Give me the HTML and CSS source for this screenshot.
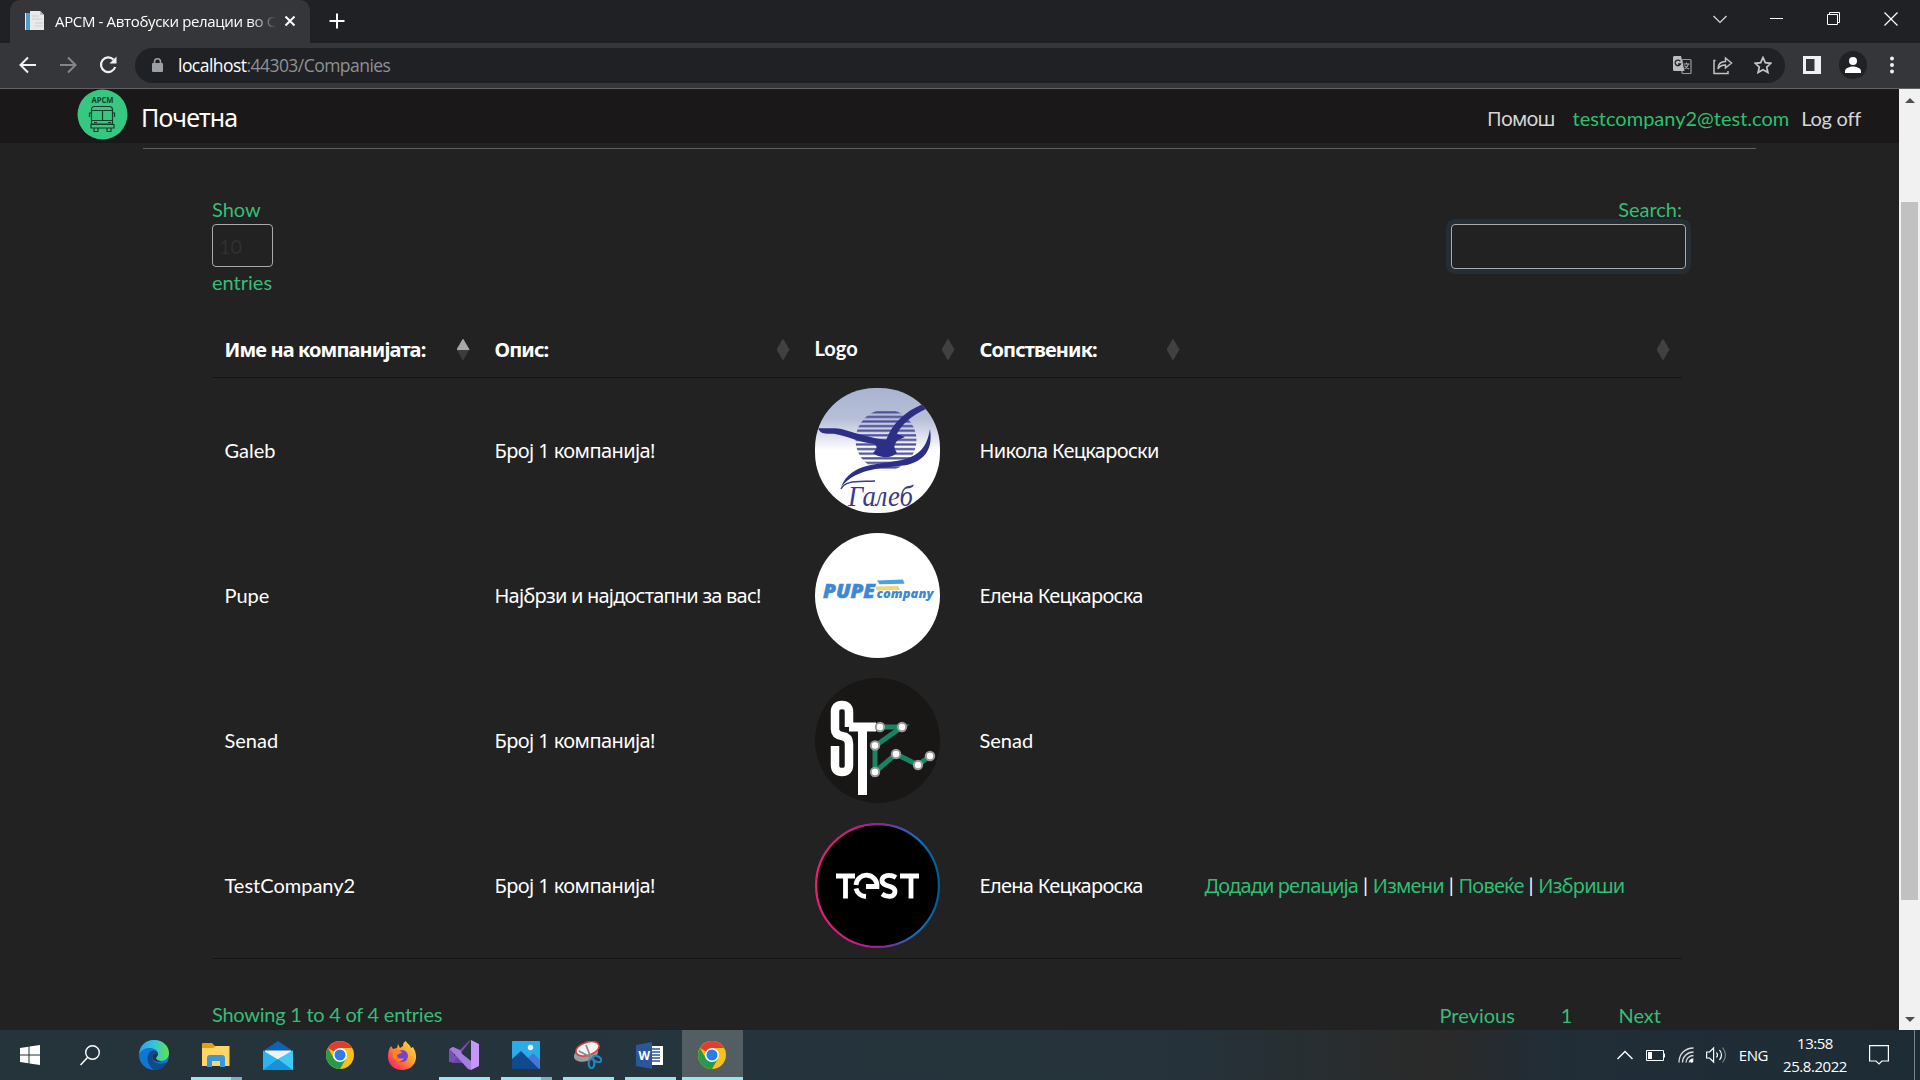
FILE: index.html
```
<!DOCTYPE html>
<html lang="mk">
<head>
<meta charset="utf-8">
<title>АРСМ - Автобуски релации во Северна Македонија</title>
<link rel="stylesheet" href="styles.css">
</head>
<body>
<header class="tabstrip">
  <div class="tab">
    <svg class="favicon" width="20" height="20" viewBox="0 0 20 20"><path d="M0 2h12v17H0z" fill="#e8edf0"/><path d="M1 2h4v17H1z" fill="#4d9bd0"/><path d="M5 0h10l4 4v15H8L5 16z" fill="#e9e9ea"/><path d="M15 0v4h4z" fill="#bbb"/><path d="M7 5h7M7 8h10M10 12h8M10 15h8" stroke="#c9ced1"/></svg>
    <span class="tab-title"><span class="t1">АРСМ - Автобуски релации во С</span></span>
    <svg class="tab-close" width="12" height="12" viewBox="0 0 12 12"><path d="M1.5 1.500l9 9M10.500 1.500l-9 9" stroke="#fff" stroke-width="2"/></svg>
  </div>
  <svg class="newtab" width="16" height="16" viewBox="0 0 16 16"><path d="M8 .5v15M.5 8h15" stroke="#fff" stroke-width="2"/></svg>
  <div class="winctl">
    <svg width="14" height="14" viewBox="0 0 14 14"><path d="M.5 4l6.500 6.500L13.500 4" fill="none" stroke="#ddd" stroke-width="1.200"/></svg>
    <svg width="14" height="14" viewBox="0 0 14 14"><path d="M0 6.500h13" stroke="#fff"/></svg>
    <svg width="14" height="14" viewBox="0 0 14 14"><path d="M.5 2.500h10v10H.5zM2.500 2.500v-2h10v10h-2" fill="none" stroke="#fff"/></svg>
    <svg width="14" height="14" viewBox="0 0 14 14"><path d="M.5.5l13 13M13.500.5l-13 13" stroke="#fff" stroke-width="1.200"/></svg>
  </div>
</header>
<div class="toolbar">
  <svg class="back" width="18" height="18" viewBox="0 0 18 18"><path d="M17 9H2M9 1.500L1.500 9 9 16.500" fill="none" stroke="#f1f1f1" stroke-width="2"/></svg>
  <svg class="fwd" width="18" height="18" viewBox="0 0 18 18"><path d="M1 9h15M9 1.500L16.500 9 9 16.500" fill="none" stroke="#85868a" stroke-width="2"/></svg>
  <svg class="reload" width="18" height="18" viewBox="0 0 18 18"><path d="M14.500 3.600A7.300 7.300 0 1 0 16.200 11" fill="none" stroke="#f1f1f1" stroke-width="2.200"/><path d="M17.500 0.500v7h-7z" fill="#f1f1f1"/></svg>
  <div class="omnibox">
    <svg width="12" height="14" viewBox="0 0 12 14"><rect x="0" y="5" width="11" height="9" rx="1" fill="#9aa0a6"/><path d="M2.500 6V3.800a3 3 0 0 1 6 0V6" fill="none" stroke="#9aa0a6" stroke-width="1.600"/></svg>
    <span class="url"><b>localhost</b>:44303/Companies</span>
    <svg class="o1" width="19" height="19" viewBox="0 0 19 19"><rect x="9" y="3.500" width="9" height="14" rx="1" fill="none" stroke="#9a9a9b" stroke-width="1.200"/><path d="M1 0h7l3.500 15H1.500A1.500 1.500 0 0 1 0 13.500V1z" fill="#bdbdbe"/><path d="M7.300 5.300A2.800 2.800 0 1 0 7.500 8H5" fill="none" stroke="#202124" stroke-width="1.300"/><path d="M10.500 8h6M13.500 6.500V8M15.500 8c-.5 2.500-2.500 4-4 5M11.500 9.500c1 1.500 3 3 4.500 3.500" fill="none" stroke="#aaa" stroke-width="1.100"/></svg>
    <svg class="o2" width="20" height="19" viewBox="0 0 20 19"><path d="M2.500 4.500H1v13h14v-2.500M5 13c0-5 3-7.500 7.500-7.500V2L18.500 7 12.500 12V9C9 9 6.500 10 5 13z" fill="none" stroke="#c2c2c3" stroke-width="1.500"/></svg>
    <svg class="o3" width="18" height="18" viewBox="0 0 18 18"><path d="M9 1.500l2.300 5.200 5.500.6-4.100 3.700 1.200 5.500L9 13.700l-4.900 2.800L5.300 11 1.200 7.300l5.500-.6z" fill="none" stroke="#c6c6c7" stroke-width="1.700"/></svg>
  </div>
  <svg class="side" width="18" height="18" viewBox="0 0 18 18"><path fill-rule="evenodd" d="M0 0h18v18H0zM3 3v12h8.500V3z" fill="#f1f1f4"/></svg>
  <svg class="person" width="28" height="28" viewBox="0 0 28 28"><circle cx="14" cy="14" r="14" fill="#202124"/><circle cx="14" cy="10" r="4" fill="#fff"/><path d="M6 22v-2c0-3 5-4.500 8-4.500s8 1.500 8 4.500v2z" fill="#fff"/></svg>
  <svg class="dots" width="4" height="18" viewBox="0 0 4 18"><circle cx="2" cy="2.500" r="2" fill="#f1f1f1"/><circle cx="2" cy="9" r="2" fill="#f1f1f1"/><circle cx="2" cy="15.500" r="2" fill="#f1f1f1"/></svg>
</div>
<main class="viewport">
  <div class="page">
    <nav class="navbar">
      <svg class="logo" width="51" height="51" viewBox="0 0 51 51"><circle cx="25.500" cy="25.500" r="25" fill="#36c780"/><text x="14.500" y="13.500" textLength="22" lengthAdjust="spacingAndGlyphs" font-family="Open Sans, sans-serif" font-weight="700" font-size="8" fill="#173c2a">АРСМ</text><path d="M14.500 35V21q0-3.500 3-3.500h15q3 0 3 3.500v14zM14.500 21.500h21M25.500 21.500V31M14.500 31.500h21M12.500 28v-4h2M37.500 28v-4h-2M14 35.500h23v3.500H14zM17 39.500v3h4v-3M30 39.500v3h4v-3M17 33.500h3M31 33.500h3" fill="none" stroke="#173c2a" stroke-width="1.200"/></svg>
      <a class="brand cy">Почетна</a>
      <div class="nav-right"><a class="cy help">Помош</a><a class="user">testcompany2@test.com</a><a class="logoff">Log off</a></div>
    </nav>
    <hr class="rule">
    <section class="content">
      <div class="controls">
        <label class="length"><span>Show</span><span class="select">10</span><span>entries</span></label>
        <label class="search"><span>Search:</span><input type="text" class="search-input"></label>
      </div>
      <table class="companies">
        <colgroup><col class="c1"><col class="c2"><col class="c3"><col class="c4"><col class="c5"></colgroup>
        <thead><tr>
          <th><div class="th"><span class="cy">Име на компанијата:</span><i class="sort asc"></i></div></th>
          <th><div class="th"><span class="cy">Опис:</span><i class="sort"></i></div></th>
          <th><div class="th"><span class="latin-head">Logo</span><i class="sort"></i></div></th>
          <th><div class="th"><span class="cy">Сопственик:</span><i class="sort"></i></div></th>
          <th><div class="th"><span></span><i class="sort"></i></div></th>
        </tr></thead>
        <tbody>
        <tr><td class="latin">Galeb</td><td><span class="cy brief">Број 1 компанија!</span></td><td>
          <svg class="pic" width="125" height="125" viewBox="0 0 125 125"><defs><linearGradient id="sky" x2="0" y2="1"><stop offset="0" stop-color="#a9b3d0"/><stop offset=".25" stop-color="#b8c0d8"/><stop offset=".5" stop-color="#fff"/></linearGradient><clipPath id="round"><rect width="125" height="125" rx="60"/></clipPath><pattern id="stripes" width="10" height="4.600" patternUnits="userSpaceOnUse"><path d="M0 1.300h10" stroke="#4c4e98" stroke-width="2.200"/></pattern></defs>
          <g clip-path="url(#round)"><rect width="125" height="125" fill="url(#sky)"/><circle cx="71" cy="52" r="30.500" fill="url(#stripes)"/>
          <path d="M3 40c9 1 17-1 27 2 13 4 27 8 41 10 7-17 18-28 37-36l3 5C97 27 86 37 82 46l8 3-7 3c-5 5-4 8-1 13-6 6-19 5-24 0 4-4 5-7 1-9-12-1-27-8-39-10C14 45 6 48 3 40z" fill="#2d2f87"/>
          <path d="M115 41c3 19-4 31-23 36-21 3-50 2-66 22 10-25 38-22 61-27 19-5 25-14 28-31z" fill="#2d2f87"/>
          <text x="33" y="118" textLength="65" lengthAdjust="spacingAndGlyphs" font-family="Liberation Serif, serif" font-style="italic" font-size="30" fill="#3a3b85">Галеб</text><path d="M26 101c4-9 17-7 34-8" fill="none" stroke="#3a3b85" stroke-width="1.500"/></g></svg></td><td><span class="cy">Никола Кецкароски</span></td><td></td></tr>
        <tr><td class="latin">Pupe</td><td><span class="cy best">Најбрзи и најдостапни за вас!</span></td><td>
          <svg class="pic" width="125" height="125" viewBox="0 0 125 125"><circle cx="62.500" cy="62.500" r="62.500" fill="#fff"/><path d="M62 47.500l26-1 1.500 4.300-25 .5z" fill="#4ba0ec"/><path d="M61 53.500l22-.5 2 4-24 .5z" fill="#f6d27c"/><text x="8" y="65" textLength="52" lengthAdjust="spacingAndGlyphs" font-family="Open Sans, sans-serif" font-weight="800" font-style="italic" font-size="19" fill="#3f88d5" stroke="#3f88d5" stroke-width=".6">PUPE</text><text x="61.500" y="65" textLength="57" lengthAdjust="spacingAndGlyphs" font-family="Open Sans, sans-serif" font-weight="800" font-style="italic" font-size="12.500" fill="#3f88d5">company</text></svg></td><td><span class="cy">Елена Кецкароска</span></td><td></td></tr>
        <tr><td class="latin">Senad</td><td><span class="cy brief">Број 1 компанија!</span></td><td>
          <svg class="pic" width="125" height="125" viewBox="0 0 125 125"><circle cx="62.500" cy="62.500" r="62.500" fill="#181715"/><path d="M34 49V34q0-7-7-7t-7 7v17q0 6 7 7 7 1 7 8v21q0 7-7 7t-7-7V68" fill="none" stroke="#fff" stroke-width="8.500"/><path d="M34 49h27M47.500 49v68" fill="none" stroke="#fff" stroke-width="9"/><path d="M65 49h22L60 68v26l21-18 22 11 12-9" fill="none" stroke="#188463" stroke-width="5"/><g fill="#fff" stroke="#9a9999" stroke-width="2"><circle cx="65" cy="49" r="4.200"/><circle cx="87" cy="49" r="4.200"/><circle cx="60" cy="67.500" r="4.200"/><circle cx="60" cy="94" r="4.200"/><circle cx="81" cy="76" r="4.200"/><circle cx="103" cy="87" r="4.200"/><circle cx="115" cy="78" r="4.200"/></g></svg></td><td class="latin">Senad</td><td></td></tr>
        <tr><td class="latin">TestCompany2</td><td><span class="cy brief">Број 1 компанија!</span></td><td>
          <svg class="pic" width="125" height="125" viewBox="0 0 125 125"><defs><linearGradient id="ring"><stop offset="0" stop-color="#ee1c75"/><stop offset=".5" stop-color="#a0218e"/><stop offset=".62" stop-color="#6f38a0"/><stop offset=".85" stop-color="#0874bd"/><stop offset="1" stop-color="#075a91"/></linearGradient></defs><circle cx="62.500" cy="62.500" r="61.400" fill="#000" stroke="url(#ring)" stroke-width="2.200"/><g fill="none" stroke="#fff" stroke-width="4.800"><path d="M21 53h19M30.500 53v22.500M85 53h19M96 53v22.500"/><path d="M41 62A10.500 10.500 0 0 1 62 63.500H51M41 65.500Q43 73 51 73.500"/><path d="M81 54.500C75 51 67 52 67 57.500c0 7 13 4 13 11 0 6-8 6-13 2.500"/></g></svg></td><td><span class="cy">Елена Кецкароска</span></td><td class="actions"><a class="cy">Додади релација</a> | <a class="cy">Измени</a> | <a class="cy">Повеќе</a> | <a class="cy">Избриши</a></td></tr>
        </tbody>
      </table>
      <footer class="table-foot"><span class="info">Showing 1 to 4 of 4 entries</span><div class="pager"><a>Previous</a><a>1</a><a>Next</a></div></footer>
    </section>
  </div>
  <aside class="scrollbar"><i class="up"></i><div class="thumb"></div><i class="down"></i></aside>
</main>
<footer class="taskbar">
  <svg class="shared" width="0" height="0"><defs>
    <linearGradient id="eg" x1="0" x2="1"><stop offset="0" stop-color="#26a5e8"/><stop offset=".5" stop-color="#35c5d8"/><stop offset="1" stop-color="#66e04a"/></linearGradient>
    <linearGradient id="ff" x1="1" x2="0" y2="1"><stop offset="0" stop-color="#ffe94a"/><stop offset=".45" stop-color="#ff9a2a"/><stop offset=".8" stop-color="#ff3a55"/><stop offset="1" stop-color="#d9219b"/></linearGradient>
    <g id="chrome"><circle cx="14" cy="14" r="14" fill="#f6c11c"/><path d="M14 14L1.900 7A14 14 0 0 1 26.100 7z" fill="#e33b2e"/><path d="M1.900 7A14 14 0 0 0 14 28l6-10.500L14 14 8 17.500z" fill="#28984a"/><path d="M14 7h12.100L20 17.500z" fill="#f6c11c"/><circle cx="14" cy="14" r="7" fill="#fff"/><circle cx="14" cy="14" r="5.500" fill="#2b7de9"/></g>
  </defs></svg>
  <div class="app start"><svg width="20" height="20" viewBox="0 0 20 20"><path d="M0 3l8.500-1.200v7.700H0zM9.500 1.600L20 0v9.500H9.500zM0 10.500h8.500v7.800L0 17zM9.500 10.500H20V20L9.500 18.400z" fill="#fff"/></svg></div>
  <div class="app find"><svg width="20" height="21" viewBox="0 0 20 21"><circle cx="12.500" cy="7.500" r="6.800" fill="none" stroke="#fff" stroke-width="1.400"/><path d="M7.500 12.500L.5 20" stroke="#fff" stroke-width="1.500"/></svg></div>
  <div class="app"><svg width="30" height="30" viewBox="0 0 30 30"><circle cx="15" cy="15" r="15" fill="#0c78d4"/><path d="M0 14C1 5 7 0 15 0c9 0 15 6 15 13 0 5-4 8-8 8-4 0-5-2-5-3 0-1 2-2 2-4C19 7 5 5 0 14z" fill="url(#eg)"/><path d="M19 14c0-3-4-5-8-2-5 5-2 14 4 18 6 0 11-3 13.500-8-8 4-16 0-15-5 .5-2 2-3 5.500-3z" fill="#114a8b"/><path d="M19 14c0 2-2 3-2 4 0 2 3 3 6 3-6 2-10-1-9.500-4 .5-2 2-4 5.500-3z" fill="#25333b"/></svg></div>
  <div class="app run"><svg width="28" height="24" viewBox="0 0 28 24"><path d="M0 1q0-1 1-1h9l3 3h14v20H0z" fill="#e3a008"/><path d="M0 5h11l3-2h13.500v20H0z" fill="#ffd567"/><path d="M5 24v-9q0-3 3-3h12q3 0 3 3v9h-5v-6h-8v6z" fill="#3b97dc"/></svg><i class="bar split"></i></div>
  <div class="app"><svg width="30" height="29" viewBox="0 0 30 29"><path d="M0 10L15 0l15 10v4H0z" fill="#0b64b4"/><path d="M2 9.500h26v12H2z" fill="#f1f2f3"/><path d="M0 9.500l15 9 15-9V29H0z" fill="#2db4ee"/><path d="M0 29l15-11 15 11z" fill="#1593da"/><path d="M15 18l15 11V9.500z" fill="#43c9f5"/></svg></div>
  <div class="app"><svg width="28" height="28" viewBox="0 0 28 28"><use href="#chrome"/></svg></div>
  <div class="app"><svg width="28" height="29" viewBox="0 0 28 29"><path d="M3 5l2 3 4-1 1-4 2 4 3-2c0-3 1-4 3-5 1 3 4 3 5 7l2-1c3 5 4 10 2 15-2 5-7 8-13 8C6 29 0 23 0 16c0-5 1-8 3-11z" fill="url(#ff)"/><circle cx="14" cy="15" r="6" fill="#7540d6"/><path d="M5 9c5-1 7 1 9 2-1 2-5 2-5 4 1 3 4 3 7 2-2 5-9 4-11-1z" fill="#ff8424"/></svg></div>
  <div class="app run"><svg width="30" height="30" viewBox="0 0 30 30"><path d="M0 9l4-2 18 14v8l-8-6L4 23l-4-2z" fill="#6d43a6"/><path d="M5 12l6 3-6 4z" fill="#25333b"/><path d="M22 0L4 23l-4-2L20 1z" fill="#7b50b4"/><path d="M0 9l5 3v7l-5 3z" fill="#7b50b4"/><path d="M4 7l7 3 11 20-3-1L1 9z" fill="#a87be0"/><path d="M4 7l18 14v9L1 9z" fill="#a87be0"/><path d="M22 0l8 4v22l-8 4z" fill="#c796fb"/></svg><i class="bar"></i></div>
  <div class="app run"><svg width="28" height="28" viewBox="0 0 28 28"><rect width="28" height="28" rx="1" fill="#2aace9"/><path d="M16 17l5-5 7 7v9H16z" fill="#4477d7"/><path d="M0 18l9-8 18 18H0z" fill="#11498c"/><circle cx="18.500" cy="6.500" r="2.700" fill="#f2f4f6"/></svg><i class="bar split"></i></div>
  <div class="app run"><svg width="28" height="28" viewBox="0 0 28 28"><ellipse cx="12" cy="13" rx="12.500" ry="7" fill="#9c9da0" transform="rotate(-18 12 13)"/><ellipse cx="13.500" cy="8" rx="12" ry="6.500" fill="#f3f3f3" stroke="#d93e3e" stroke-width="1.500" transform="rotate(-18 13 8)"/><path d="M12 4l5 13M5 10l13 7" stroke="#888" stroke-width="1.700"/><g fill="none" stroke="#2385c5" stroke-width="2.200"><ellipse cx="23" cy="18" rx="4.500" ry="2.700" transform="rotate(25 23 18)"/><ellipse cx="17.500" cy="22.500" rx="2.800" ry="4.500"/></g></svg><i class="bar"></i></div>
  <div class="app run"><svg class="word" width="27" height="27" viewBox="0 0 27 27"><path d="M15 4h12v19H15z" fill="#fff"/><path d="M16 7h8M16 10h8M16 13h8M16 16h8M16 19h8" stroke="#2b579a" stroke-width="1.300"/><path d="M0 3l16-3v27L0 24z" fill="#2b579a"/><text x="2.500" y="18" font-family="Open Sans, sans-serif" font-weight="700" font-size="12" fill="#fff">W</text></svg><i class="bar"></i></div>
  <div class="app run active"><svg width="28" height="28" viewBox="0 0 28 28"><use href="#chrome"/></svg><i class="bar"></i></div>
  <div class="tray">
    <svg class="caret" width="16" height="10" viewBox="0 0 16 10"><path d="M.5 9L8 1.500 15.500 9" fill="none" stroke="#fff" stroke-width="1.400"/></svg>
    <svg class="batt" width="19" height="11" viewBox="0 0 19 11"><path d="M.5.5h17v10H.5z" fill="none" stroke="#fff"/><path d="M2 2h4v7H2zM18 3.500h1v4h-1z" fill="#fff"/></svg>
    <svg class="wifi" width="17" height="16" viewBox="0 0 17 16"><g fill="none" stroke="#ddd" stroke-width="1.300"><path d="M1 15.500C1 7 7 1 15.500 1M4.500 15.500c0-6 5-10.500 11-10.500M8 15.500C8 11.500 11.500 8.500 15.500 8.500M11.300 15.500c0-2 2-3.500 4.200-3.500"/></g><circle cx="13.700" cy="14" r="1.700" fill="#fff"/></svg>
    <svg class="vol" width="21" height="18" viewBox="0 0 21 18"><path d="M.6 6h3l4-4v14l-4-4h-3z" fill="none" stroke="#fff" stroke-width="1.200"/><path d="M10.500 6.500q2 2.500 0 5M13.500 4q4 5 0 10" fill="none" stroke="#fff" stroke-width="1.200"/><path d="M16.500 1.500q6 7.500 0 15" fill="none" stroke="#7a838a" stroke-width="1.200"/></svg>
    <span class="lang">ENG</span>
    <div class="clock"><span>13:58</span><span>25.8.2022</span></div>
    <svg class="note" width="20" height="20" viewBox="0 0 20 20"><path d="M.6.6h18.800v15.400h-6.500L10 19l-3-3H.6z" fill="none" stroke="#fff" stroke-width="1.200"/></svg>
    <i class="peek"></i>
  </div>
</footer>
</body>
</html>
```
FILE: styles.css
```
* { box-sizing: border-box; }
body { margin: 0; width: 1920px; height: 1080px; overflow: hidden; display: flex; flex-direction: column; background: #222; font-family: "Lato", sans-serif; font-size: 20px; line-height: 28px; color: #fff; }
svg { display: block; flex: none; }
.shared { visibility: hidden; }
.cy { font-family: "Noto Sans", "Open Sans", sans-serif; letter-spacing: -0.7px; }
.brief { letter-spacing: -0.59px; }
.best { letter-spacing: -0.79px; }

.tabstrip { height: 43px; flex: none; display: flex; background: #202124; padding-left: 10px; }
.tab { width: 300px; height: 43px; background: #35363a; border-radius: 10px 10px 0 0; display: flex; align-items: center; padding: 0 14px 2px 15px; }
.tab-title { width: 222px; margin-left: 10px; overflow: hidden; white-space: nowrap; font: 15px/20px "Open Sans", sans-serif; letter-spacing: -0.35px; -webkit-mask-image: linear-gradient(90deg, #000 195px, transparent 222px); mask-image: linear-gradient(90deg, #000 195px, transparent 222px); }
.tab-close { margin-left: 8.5px; }
.newtab { margin: 13px 0 0 19px; }
.winctl { margin-left: auto; display: flex; gap: 43px; padding: 12px 22px 0 0; }

.toolbar { height: 46px; flex: none; display: flex; align-items: center; background: #35363a; border-bottom: 1px solid #606164; padding: 0 20px 1px 19px; }
.fwd { margin-left: 22px; }
.reload { margin-left: 22px; }
.omnibox { width: 1650px; flex: none; height: 35px; margin: 0 0 0 18px; border-radius: 18px; background: #202124; display: flex; align-items: center; padding: 0 13px 0 17px; }
.url { margin-left: 14px; font: 17.5px/24px "Open Sans", sans-serif; letter-spacing: -0.54px; color: #8f9195; flex: 1; }
.url b { font-weight: 400; color: #fff; }
.o2 { margin-left: 21px; }
.o3 { margin-left: 21px; }
.side { margin-left: 18px; }
.person { margin-left: 18px; }
.dots { margin-left: 23px; }

.viewport { flex: 1; display: flex; min-height: 0; }
.page { width: 1899px; }
.navbar { height: 54px; background: #1a1818; display: flex; align-items: center; padding: 0 38px 0 77px; }
.logo { margin-top: -3px; }
.brand { font-size: 25px; margin: 2px 0 0 13px; letter-spacing: -0.8px; }
.nav-right { margin: 5px 0 0 auto; display: flex; }
.help, .logoff { color: #d6d6d6; }
.user, .logoff { margin-top: -1px; }
.logoff { letter-spacing: -0.25px; }
.help { letter-spacing: -0.85px; }
.user { color: #2cc06f; margin-left: 18px; margin-right: 12px; }
.rule { width: 1613px; height: 1px; border: 0; margin: 5px 0 0 143px; background: #5f5f5f; }
.content { width: 1470px; margin: 46px 0 0 212px; }
.controls { height: 113px; display: flex; justify-content: space-between; color: #36bd77; }
.length, .search { display: flex; flex-direction: column; }
.select { width: 61px; height: 43px; border: 1px solid #aaa; border-radius: 4px; padding: 7px 6px; color: #303030; margin: 1px 0; }
.search { align-items: flex-end; }
.search-input { width: 235px; height: 45px; margin: 1px -4px 0 0; border: 1px solid #aaa; border-radius: 4px; background: transparent; outline: none; box-shadow: 0 0 0 5px #252d35; }

.companies { width: 1470px; table-layout: fixed; border-collapse: separate; border-spacing: 0; border-bottom: 1px solid #151515; }
.c1 { width: 270px; } .c2 { width: 320px; } .c3 { width: 165px; } .c4 { width: 225px; } .c5 { width: 490px; }
.companies th { height: 70px; padding: 14px 12.5px 0; border-bottom: 1px solid #151515; text-align: left; font-weight: 700; }
.companies th .cy { letter-spacing: -0.88px; }
.latin-head { padding-bottom: 2px; margin-top: -2px; }
.th { display: flex; justify-content: space-between; align-items: center; height: 28px; }
.sort { width: 13px; height: 22px; background: #414141; clip-path: polygon(50% 0, 100% 50%, 50% 100%, 0 50%); }
.sort.asc { background: linear-gradient(#a9a9a9 50%, #3c3c3c 50%); }
.companies td { height: 145px; padding: 0 0 0 12.5px; vertical-align: middle; white-space: nowrap; }
.companies td.latin { padding-bottom: 2px; }
.actions { word-spacing: -0.3px; }
.actions a { color: #2fbd73; letter-spacing: -0.82px; }
.table-foot { display: flex; justify-content: space-between; margin-top: 41px; color: #36bd77; }
.info { letter-spacing: -0.25px; }
.pager { display: flex; gap: 46px; padding: 1px 21px 0 0; }

.scrollbar { width: 21px; background: #f1f1f1; display: flex; flex-direction: column; align-items: center; padding: 9px 0 8px; }
.up { border: 5px solid transparent; border-top: 0; border-bottom-color: #505050; }
.down { border: 5px solid transparent; border-bottom: 0; border-top-color: #505050; margin-top: auto; }
.thumb { width: 17px; height: 698px; background: #c1c1c1; margin-top: 99px; }

.taskbar { height: 50px; flex: none; display: flex; background: linear-gradient(90deg, #25333b 0, #25353d 680px, #25323a 1180px, #2a2a29 1440px, #222d36 1540px, #202d38 1650px, #1d2c34 1920px); }
.app { width: 62px; flex: none; display: flex; flex-direction: column; align-items: center; justify-content: center; position: relative; }
.start { width: 60px; }
.find { width: 60px; margin-right: 3px; }
.word { margin-left: -2px; }
.bar { position: absolute; left: 6px; bottom: 0; width: 51px; height: 3px; background: #8fe9ee; }
.split { background: linear-gradient(90deg, #8fe9ee 40px, #74b5bb 40px); }
.active { background: #535e63; width: 61px; margin-left: 1px; padding-right: 1px; }
.active .bar { left: 0; width: 61px; }
.tray { margin-left: auto; display: flex; align-items: center; padding-right: 5px; font: 15px/23px "Open Sans", sans-serif; letter-spacing: -0.45px; }
.batt { margin-left: 13px; }
.wifi { margin-left: 13px; }
.vol { margin-left: 11px; }
.lang { margin-left: 12px; }
.clock { width: 66px; margin: 0 21px 0 14px; display: flex; flex-direction: column; align-items: center; }
.peek { width: 1px; height: 50px; margin-left: 25px; background: #7a8388; }
```
